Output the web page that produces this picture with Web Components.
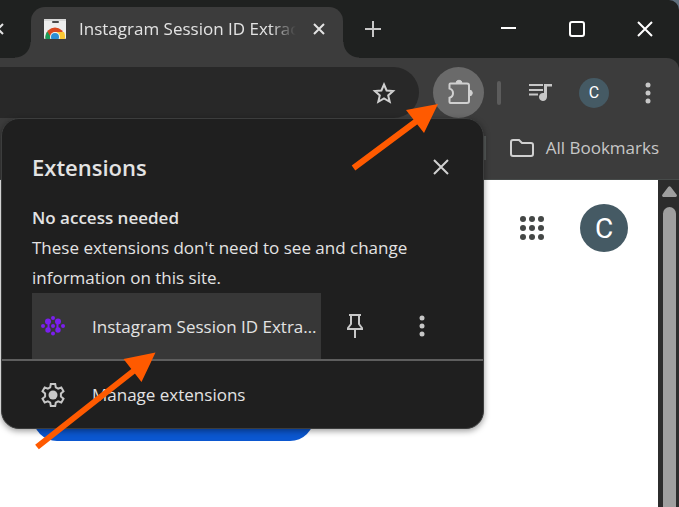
<!DOCTYPE html>
<html lang="en">
<head>
<meta charset="UTF-8">
<meta name="viewport" content="width=device-width, initial-scale=1.0">
<title>Extensions</title>
<style>
  html, body {
    height: 100%;
    margin: 0;
  }
  body {
    background: #5f6e7c;
    font-family: "Open Sans", "Noto Sans", sans-serif;
    font-size: 17px;
    color: #e3e3e3;
    overflow: hidden;
  }
</style>
</head>
<body>
<browser-window>
  <tab-strip slot="tabs">Instagram Session ID Extractor</tab-strip>
  <browser-toolbar slot="toolbar"></browser-toolbar>
  <bookmarks-bar slot="bookmarks">All Bookmarks</bookmarks-bar>
  <page-view slot="page"></page-view>
  <extensions-menu slot="popup">
    <extension-item>Instagram Session ID Extractor</extension-item>
  </extensions-menu>
  <pointer-arrows slot="arrows"></pointer-arrows>
</browser-window>

<script>
const buttonReset = `
  button {
    display: flex;
    align-items: center;
    justify-content: center;
    flex: none;
    padding: 0;
    border: 0;
    background: none;
    color: inherit;
    font: inherit;
    cursor: pointer;
  }
  svg { display: block; flex: none; }
`;

class BrowserWindow extends HTMLElement {
  connectedCallback() {
    this.attachShadow({ mode: 'open' });
    this.shadowRoot.innerHTML = `
      <style>
        :host {
          display: flex;
          flex-direction: column;
          position: relative;
          height: 100%;
          overflow: hidden;
          background: #1f2120;
          border-top-right-radius: 10px;
        }
        .chrome {
          background: #3c3c3c;
          border-top-right-radius: 12px;
          border-bottom: 1px solid #474b4a;
        }
      </style>
      <slot name="tabs"></slot>
      <div class="chrome">
        <slot name="toolbar"></slot>
        <slot name="bookmarks"></slot>
      </div>
      <slot name="page"></slot>
      <slot name="popup"></slot>
      <slot name="arrows"></slot>
    `;
  }
}

class TabStrip extends HTMLElement {
  connectedCallback() {
    this.attachShadow({ mode: 'open' });
    this.shadowRoot.innerHTML = `
      <style>
        ${buttonReset}
        :host {
          display: flex;
          align-items: flex-end;
          height: 58px;
          flex: none;
        }
        .previous {
          width: 31px;
          height: 58px;
          justify-content: flex-start;
          overflow: hidden;
        }
        .previous svg { margin-left: -8px; }
        .tab {
          position: relative;
          display: flex;
          align-items: center;
          box-sizing: border-box;
          width: 312px;
          height: 51px;
          padding: 0 9px 8px 13px;
          background: #3c3c3c;
          border-radius: 14px 14px 0 0;
        }
        .tab::before, .tab::after {
          content: "";
          position: absolute;
          bottom: 0;
          width: 16px;
          height: 16px;
        }
        .tab::before {
          right: 100%;
          background: radial-gradient(circle at 0 0, transparent 15px, #3c3c3c 16px);
        }
        .tab::after {
          left: 100%;
          background: radial-gradient(circle at 100% 0, transparent 15px, #3c3c3c 16px);
        }
        .title {
          flex: 1;
          min-width: 0;
          margin: 0 8px 0 13px;
          line-height: 28px;
          white-space: nowrap;
          overflow: hidden;
          mask-image: linear-gradient(to right, #000 88%, transparent);
        }
        .close { width: 30px; height: 30px; }
        .add { width: 60px; height: 58px; }
        .controls { display: flex; margin-left: auto; color: #fff; }
        .controls button { width: 68px; height: 58px; }
      </style>
      <button class="previous" aria-label="Close previous tab">
        <svg width="12" height="12" fill="none" stroke="currentColor" stroke-width="2"><path d="M1 1l10 10M11 1L1 11"/></svg>
      </button>
      <div class="tab">
        <svg width="22" height="20" viewBox="0 0 22 20">
          <defs><clipPath id="icon"><rect width="22" height="20" rx="1"/></clipPath></defs>
          <g clip-path="url(#icon)">
            <rect width="22" height="20" fill="#eeeeee"/>
            <rect width="22" height="2" fill="#d8d8d8"/>
            <rect x="8" y="2" width="7" height="2" rx="1" fill="#4a4a4a"/>
            <circle cx="11" cy="18" r="9.500" fill="#d9481f"/>
            <path d="M1.500 20c-.4-3 .3-6 1.800-7.500L8 20z" fill="#1a9b57"/>
            <path d="M11 13h9c1 2 1.300 5 .8 7H12z" fill="#fbc834"/>
            <circle cx="11" cy="18" r="5" fill="#f5f5f5"/>
            <circle cx="11" cy="18" r="4" fill="#2d8fd5"/>
          </g>
        </svg>
        <span class="title"><slot></slot></span>
        <button class="close" aria-label="Close tab">
          <svg width="12" height="12" fill="none" stroke="currentColor" stroke-width="2"><path d="M1 1l10 10M11 1L1 11"/></svg>
        </button>
      </div>
      <button class="add" aria-label="New tab">
        <svg width="16" height="16" fill="none" stroke="#c7c7c7" stroke-width="2"><path d="M8 0v16M0 8h16"/></svg>
      </button>
      <div class="controls">
        <button aria-label="Minimize"><svg width="16" height="16" fill="none" stroke="currentColor" stroke-width="2"><path d="M0 7h15"/></svg></button>
        <button aria-label="Maximize"><svg width="16" height="16" fill="none" stroke="currentColor" stroke-width="2"><rect x="1" y="1" width="14" height="14" rx="2"/></svg></button>
        <button aria-label="Close"><svg width="16" height="16" fill="none" stroke="currentColor" stroke-width="2"><path d="M1 1l14 14M15 1L1 15"/></svg></button>
      </div>
    `;
  }
}

class BrowserToolbar extends HTMLElement {
  connectedCallback() {
    this.attachShadow({ mode: 'open' });
    this.shadowRoot.innerHTML = `
      <style>
        ${buttonReset}
        :host {
          display: flex;
          align-items: center;
          padding: 9px 7px 8px 0;
        }
        .address {
          display: flex;
          align-items: center;
          flex: 1;
          min-width: 0;
          height: 51px;
          margin-right: 14px;
          padding-right: 11px;
          box-sizing: border-box;
          background: #282828;
          border-radius: 0 26px 26px 0;
        }
        input {
          flex: 1;
          min-width: 0;
          border: 0;
          outline: 0;
          background: none;
          color: inherit;
          font: inherit;
        }
        .star { width: 48px; height: 48px; }
        .puzzle {
          width: 51px;
          height: 51px;
          border-radius: 50%;
          background: #6a6a6a;
        }
        .divider {
          width: 4px;
          height: 24px;
          margin: 0 15px 0 13px;
          border-radius: 2px;
          background: #5c5c5c;
        }
        .actions { display: flex; gap: 6px; color: #c7c7c7; }
        .actions button { width: 48px; height: 48px; }
        .avatar {
          width: 30px;
          line-height: 30px;
          border-radius: 50%;
          background: #455a64;
          color: #fff;
          font-family: Roboto, sans-serif;
          font-size: 16px;
        }
      </style>
      <div class="address">
        <input type="text" aria-label="Address">
        <button class="star" aria-label="Bookmark this tab">
          <svg width="24" height="24" viewBox="0 0 24 24" fill="none" stroke="#d0d0d0" stroke-width="2"><path d="M12 3.500l2.600 6 6.500.6-4.900 4.300 1.500 6.400-5.700-3.400-5.700 3.400 1.500-6.400-4.900-4.300 6.500-.6z"/></svg>
        </button>
      </div>
      <button class="puzzle" aria-label="Extensions">
        <svg width="28" height="28" viewBox="0 0 28 28" fill="none" stroke="#d0d0d0" stroke-width="2">
          <path d="M5.500 4.500h16.500a2 2 0 0 1 2 2v15.500a2 2 0 0 1-2 2h-16.500a1 1 0 0 1-1-1v-4.200c2.200-.6 3.500-2.300 3.500-4.600s-1.300-4-3.500-4.600V5.500a1 1 0 0 1 1-1z"/>
          <path d="M11 4.500a3 3.300 0 0 1 6 0zM24 11a3.300 3 0 0 1 0 6z" fill="#d0d0d0" stroke-width="1"/>
        </svg>
      </button>
      <span class="divider"></span>
      <div class="actions">
        <button aria-label="Media controls">
          <svg width="24" height="24" viewBox="0 0 24 24" fill="currentColor"><path d="M1 3h14v2H1zM1 8h14v2H1zM1 12.500h9v2H1zM16 3h8v2.500H19v10.500a4 4 0 1 1-3-3.900z"/></svg>
        </button>
        <button aria-label="Profile"><span class="avatar">C</span></button>
        <button aria-label="Menu">
          <svg width="6" height="22" fill="currentColor"><circle cx="3" cy="3" r="2.500"/><circle cx="3" cy="11" r="2.500"/><circle cx="3" cy="19" r="2.500"/></svg>
        </button>
      </div>
    `;
  }
}

class BookmarksBar extends HTMLElement {
  connectedCallback() {
    this.attachShadow({ mode: 'open' });
    this.shadowRoot.innerHTML = `
      <style>
        ${buttonReset}
        :host {
          display: flex;
          align-items: center;
          justify-content: flex-end;
          height: 43px;
          padding: 0 20px 10px 0;
        }
        .divider {
          width: 2px;
          height: 24px;
          margin-right: 24px;
          background: #565a59;
        }
        button { gap: 12px; color: #c7c7c7; }
      </style>
      <span class="divider"></span>
      <button>
        <svg width="24" height="20" fill="none" stroke="#d0d0d0" stroke-width="2"><path d="M3 2h6l3 3h9a2 2 0 0 1 2 2v9a2 2 0 0 1-2 2H3a2 2 0 0 1-2-2V4a2 2 0 0 1 2-2z"/></svg>
        <slot></slot>
      </button>
    `;
  }
}

class PageView extends HTMLElement {
  connectedCallback() {
    this.attachShadow({ mode: 'open' });
    this.shadowRoot.innerHTML = `
      <style>
        ${buttonReset}
        :host {
          display: flex;
          flex: 1;
          min-height: 0;
          background: #fff;
        }
        main { flex: 1; }
        header {
          display: flex;
          align-items: center;
          justify-content: flex-end;
          gap: 24px;
          padding: 24px 30px 0 0;
        }
        header button { width: 48px; height: 48px; }
        .avatar {
          border-radius: 50%;
          background: #455a64;
          color: #fff;
          font-family: Roboto, sans-serif;
          font-size: 28px;
        }
        .apps svg { fill: #444746; }
        .action {
          width: 281px;
          height: 48px;
          margin: 141px 0 0 33px;
          border-radius: 24px;
          background: #0b57d0;
        }
        .scrollbar {
          display: flex;
          flex-direction: column;
          align-items: center;
          gap: 10px;
          box-sizing: border-box;
          width: 21px;
          padding: 6px 0 0 2px;
          background: #2c2c2c;
        }
        .thumb {
          flex: 1;
          width: 13px;
          border-radius: 7px 7px 0 0;
          background: #9f9f9f;
        }
      </style>
      <main>
        <header>
          <button class="apps" aria-label="Google apps">
            <svg width="24" height="24">
              <circle cx="3" cy="3" r="3"/><circle cx="12" cy="3" r="3"/><circle cx="21" cy="3" r="3"/>
              <circle cx="3" cy="12" r="3"/><circle cx="12" cy="12" r="3"/><circle cx="21" cy="12" r="3"/>
              <circle cx="3" cy="21" r="3"/><circle cx="12" cy="21" r="3"/><circle cx="21" cy="21" r="3"/>
            </svg>
          </button>
          <button class="avatar">C</button>
        </header>
        <button class="action" aria-label="Remove from Chrome"></button>
      </main>
      <div class="scrollbar">
        <svg width="15" height="11" fill="#9f9f9f"><path d="M6 1.200a2 2 0 0 1 3 0l5.500 7.300a1.500 1.500 0 0 1-1.200 2.500H1.700a1.500 1.500 0 0 1-1.200-2.500z"/></svg>
        <div class="thumb"></div>
      </div>
    `;
  }
}

class ExtensionsMenu extends HTMLElement {
  connectedCallback() {
    this.attachShadow({ mode: 'open' });
    this.shadowRoot.innerHTML = `
      <style>
        ${buttonReset}
        :host {
          position: absolute;
          top: 118px;
          left: 1px;
          box-sizing: border-box;
          width: 483px;
          max-width: 100%;
          border: 1px solid #3c3d3d;
          border-radius: 18px;
          background: #1f1f1f;
          box-shadow: 0 2px 6px rgba(0, 0, 0, 0.4);
        }
        header {
          display: flex;
          align-items: center;
          justify-content: space-between;
          padding: 32px 27px 20px 30px;
        }
        h2 {
          margin: 0;
          font-size: 22px;
          font-weight: 600;
          line-height: 32px;
        }
        .close { width: 30px; height: 30px; }
        section { padding: 0 30px; line-height: 30px; }
        h3, p { margin: 0; font-size: inherit; }
        h3 { font-weight: 600; }
        .manage {
          justify-content: flex-start;
          gap: 25px;
          width: 100%;
          height: 69px;
          padding-left: 37px;
          border-top: 2px solid #5e5e5e;
        }
      </style>
      <header>
        <h2>Extensions</h2>
        <button class="close" aria-label="Close">
          <svg width="16" height="16" fill="none" stroke="#d0d0d0" stroke-width="2"><path d="M1 1l14 14M15 1L1 15"/></svg>
        </button>
      </header>
      <section>
        <h3>No access needed</h3>
        <p>These extensions don't need to see and change information on this site.</p>
      </section>
      <slot></slot>
      <button class="manage">
        <svg width="28" height="28" viewBox="0 0 28 28" fill="none" stroke="#c7c7c7" stroke-width="2">
          <path d="M11.800 3h4.400l.6 3.400 2.300 1.300 3.200-1.200 2.200 3.800-2.600 2.200v3l2.600 2.200-2.200 3.800-3.200-1.200-2.300 1.300-.6 3.400h-4.400l-.6-3.400-2.300-1.300-3.200 1.200-2.200-3.800 2.600-2.200v-3l-2.600-2.200 2.200-3.800 3.200 1.200 2.300-1.300z"/>
          <circle cx="14" cy="14" r="4.500" fill="#c7c7c7" stroke="none"/>
        </svg>
        Manage extensions
      </button>
    `;
  }
}

class ExtensionItem extends HTMLElement {
  connectedCallback() {
    this.attachShadow({ mode: 'open' });
    this.shadowRoot.innerHTML = `
      <style>
        ${buttonReset}
        :host {
          display: flex;
          height: 66px;
          padding: 0 28px 0 30px;
        }
        .name {
          flex: 1;
          min-width: 0;
          gap: 26px;
          padding: 0 4px 0 8px;
          background: #373737;
          text-align: left;
        }
        .label {
          flex: 1;
          min-width: 0;
          overflow: hidden;
          text-overflow: ellipsis;
          white-space: nowrap;
        }
        .action { width: 67px; color: #c7c7c7; }
      </style>
      <button class="name">
        <svg width="26" height="20" viewBox="0 0 26 20" fill="#7a1fee" stroke="#7a1fee">
          <g stroke="none">
            <circle cx="13" cy="2" r="2"/><circle cx="13" cy="10" r="2"/><circle cx="13" cy="17.500" r="2"/>
            <circle cx="3" cy="10" r="2"/><circle cx="23" cy="10" r="2"/>
            <circle cx="8" cy="5.500" r="3"/><circle cx="18" cy="5.500" r="3"/>
            <circle cx="8" cy="14" r="2.700"/><circle cx="18" cy="14" r="2.700"/>
          </g>
          <path d="M8.500 5v9M17.500 5v9" stroke-width="2"/>
        </svg>
        <span class="label"><slot></slot></span>
      </button>
      <button class="action" aria-label="Pin extension">
        <svg width="18" height="26" viewBox="0 0 18 26" fill="none" stroke="currentColor" stroke-width="2"><path d="M3 2h12M5 2v9l-3 4v1h14v-1l-3-4V2M9 16v9"/></svg>
      </button>
      <button class="action" aria-label="More options">
        <svg width="6" height="22" fill="currentColor"><circle cx="3" cy="3" r="2.500"/><circle cx="3" cy="11" r="2.500"/><circle cx="3" cy="19" r="2.500"/></svg>
      </button>
    `;
  }
}

class PointerArrows extends HTMLElement {
  connectedCallback() {
    this.attachShadow({ mode: 'open' });
    this.shadowRoot.innerHTML = `
      <style>
        :host {
          position: absolute;
          top: 0;
          left: 0;
          pointer-events: none;
        }
        svg { display: block; }
      </style>
      <svg width="460" height="460" fill="#ff5a00" stroke="#ff5a00">
        <path d="M353.500 168L418 120M37 447L136 369" stroke-width="6"/>
        <path d="M438 104l-32 6 18 23zM155.500 352.500l-32 6.500 18 23z" stroke="none"/>
      </svg>
    `;
  }
}

customElements.define('browser-window', BrowserWindow);
customElements.define('tab-strip', TabStrip);
customElements.define('browser-toolbar', BrowserToolbar);
customElements.define('bookmarks-bar', BookmarksBar);
customElements.define('page-view', PageView);
customElements.define('extensions-menu', ExtensionsMenu);
customElements.define('extension-item', ExtensionItem);
customElements.define('pointer-arrows', PointerArrows);
</script>
</body>
</html>
